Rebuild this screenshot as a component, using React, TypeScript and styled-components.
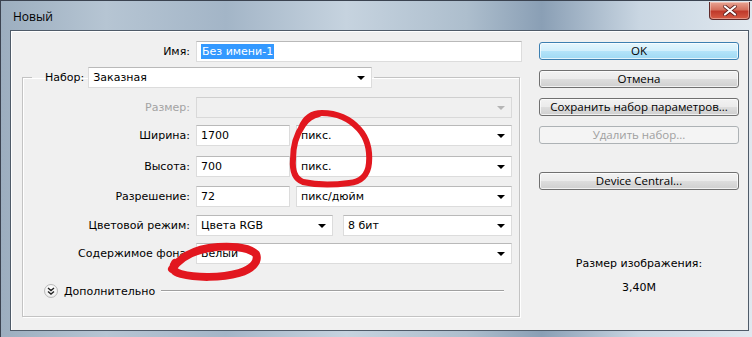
import styled, { createGlobalStyle } from 'styled-components';

const GlobalStyle = createGlobalStyle`
  html, body {
    margin: 0;
    padding: 0;
    background: #6f8aa6;
  }
  * {
    box-sizing: border-box;
  }
`;

const uiFont = `'DejaVu Sans', Tahoma, sans-serif`;
const shellFont = `'Open Sans', 'Segoe UI', sans-serif`;

function Combo({
  value,
  width,
  disabled,
  offset,
}: {
  value?: string;
  width: number;
  disabled?: boolean;
  offset?: number;
}): React.ReactElement {
  return (
    <Field $width={width} $disabled={disabled} $offset={offset}>
      <ComboValue>{value}</ComboValue>
      <Caret $disabled={disabled} />
    </Field>
  );
}

function App(): React.ReactElement {
  return (
    <>
      <GlobalStyle />
      <Window>
        <TitleBar>
          <Title>Новый</Title>
          <CloseButton aria-label="Закрыть">
            <svg width="14" height="11" viewBox="0 0 14 11">
              <path
                d="M2 1.5 L12 9.5 M12 1.5 L2 9.5"
                stroke="#5a1d1d"
                strokeWidth="3.6"
                strokeLinecap="round"
              />
              <path
                d="M2 1.5 L12 9.5 M12 1.5 L2 9.5"
                stroke="#fff"
                strokeWidth="2.2"
                strokeLinecap="round"
              />
            </svg>
          </CloseButton>
        </TitleBar>

        <Client>
          <FormColumn>
            <Row>
              <Label $width={179}>Имя:</Label>
              <Field $width={326}>
                <Selected>Без имени-1</Selected>
              </Field>
            </Row>

            <Group>
              <Legend>
                <Label>Набор:</Label>
                <Combo value="Заказная" width={284} />
              </Legend>

              <Row $top={9}>
                <Label $width={167} $disabled>
                  Размер:
                </Label>
                <Combo width={316} disabled />
              </Row>
              <Row $top={7}>
                <Label $width={167}>Ширина:</Label>
                <Field $width={94}>1700</Field>
                <Combo value="пикс." width={216} />
              </Row>
              <Row $top={10}>
                <Label $width={167}>Высота:</Label>
                <Field $width={94}>700</Field>
                <Combo value="пикс." width={216} />
              </Row>
              <Row $top={9}>
                <Label $width={167}>Разрешение:</Label>
                <Field $width={94}>72</Field>
                <Combo value="пикс/дюйм" width={216} />
              </Row>
              <Row $top={8}>
                <Label $width={167}>Цветовой режим:</Label>
                <Combo value="Цвета RGB" width={137} />
                <Combo value="8 бит" width={169} offset={4} />
              </Row>
              <Row $top={7}>
                <Label $width={167}>Содержимое фона:</Label>
                <Combo value="Белый" width={316} />
              </Row>

              <Advanced>
                <ExpandIcon>
                  <svg width="8" height="8" viewBox="0 0 8 8">
                    <path
                      d="M1 1 L4 3.5 L7 1 M1 4.5 L4 7 L7 4.5"
                      fill="none"
                      stroke="#222"
                      strokeWidth="1.4"
                    />
                  </svg>
                </ExpandIcon>
                <span>Дополнительно</span>
                <Etched />
              </Advanced>
            </Group>
          </FormColumn>

          <ButtonColumn>
            <Button $primary>OK</Button>
            <Button>Отмена</Button>
            <Button>Сохранить набор параметров...</Button>
            <Button disabled>Удалить набор...</Button>
            <Button $top={28}>Device Central...</Button>
            <SizeInfo>
              <p>Размер изображения:</p>
              <p>3,40M</p>
            </SizeInfo>
          </ButtonColumn>
        </Client>

        <Marks width="752" height="337" viewBox="0 0 752 337">
          <path
            d="M300 127 C304 117, 311 112, 321 112 C334 112, 348 117, 358 128 C366 137, 369 150, 368 162 C367 174, 360 181, 348 182 C333 184, 315 184, 302 181 C294 178, 291 170, 292 158 C292 146, 295 134, 302 124 C306 118, 312 114, 318 113"
            fill="none"
            stroke="#e2171f"
            strokeWidth="6"
            strokeLinecap="round"
            strokeLinejoin="round"
          />
          <path
            d="M171 268 C178 258, 190 250, 208 247 C228 244, 248 246, 255 253 C258 260, 252 268, 238 272 C220 277, 195 277, 180 273 C173 271, 170 268, 174 262"
            fill="none"
            stroke="#e2171f"
            strokeWidth="8"
            strokeLinecap="round"
            strokeLinejoin="round"
          />
        </Marks>
      </Window>
    </>
  );
}

export default App;

const Window = styled.div`
  position: relative;
  width: 752px;
  height: 337px;
  display: flex;
  flex-direction: column;
  padding: 0 3px 6px 9px;
  border-top: 1px solid #3b4350;
  border-left: 1px solid #3b4350;
  background: linear-gradient(
    90deg,
    #9caebf 0%,
    #b6c5d3 14%,
    #a3b5c7 30%,
    #c6d3df 46%,
    #adbecd 62%,
    #8a9fb5 72%,
    #c9d6e2 85%,
    #e0e8ef 100%
  );
  overflow: hidden;
`;

const TitleBar = styled.div`
  height: 29px;
  display: flex;
  align-items: flex-start;
  justify-content: space-between;
  padding: 0 0 0 3px;
`;

const Title = styled.span`
  margin-top: 7px;
  font-family: ${shellFont};
  font-size: 12px;
  color: #000;
`;

const CloseButton = styled.button`
  width: 41px;
  height: 18px;
  margin-top: 1px;
  margin-right: -1px;
  padding: 0;
  display: flex;
  align-items: center;
  justify-content: center;
  border: 1px solid #5f2a2a;
  border-top: none;
  border-radius: 0 0 4px 4px;
  background: linear-gradient(180deg, #e8a493 0%, #d4705d 45%, #c0392b 55%, #d65c45 100%);
  box-shadow: inset 0 0 0 1px rgba(255, 255, 255, 0.35);
`;

const Client = styled.div`
  flex: 1;
  display: flex;
  padding: 10px 9px 0 0;
  background: #f0f0f0;
  border: 1px solid #4f5b69;
  box-shadow: inset 1px 1px 0 #ffffff;
  font-family: ${uiFont};
  font-size: 11px;
  color: #000;
`;

const FormColumn = styled.div`
  width: 528px;
  display: flex;
  flex-direction: column;
  gap: 5px;
`;

const Row = styled.div<{ $top?: number }>`
  display: flex;
  align-items: center;
  gap: 6px;
  margin-top: ${({ $top }) => $top ?? 0}px;
`;

const Label = styled.label<{ $width?: number; $disabled?: boolean }>`
  ${({ $width }) => ($width ? `width: ${$width}px;` : '')}
  text-align: right;
  white-space: nowrap;
  color: ${({ $disabled }) => ($disabled ? '#a3a3a3' : '#000')};
`;

const Field = styled.div<{ $width: number; $disabled?: boolean; $offset?: number }>`
  width: ${({ $width }) => $width}px;
  height: 21px;
  margin-left: ${({ $offset }) => $offset ?? 0}px;
  display: flex;
  align-items: center;
  padding: 0 4px;
  background: ${({ $disabled }) => ($disabled ? '#f0f0f0' : '#ffffff')};
  border: 1px solid ${({ $disabled }) => ($disabled ? '#d9d9d9' : '#dcdcdc')};
  border-top-color: ${({ $disabled }) => ($disabled ? '#cfcfcf' : '#b9b9b9')};
  white-space: nowrap;
`;

const ComboValue = styled.span`
  flex: 1;
`;

const Caret = styled.span<{ $disabled?: boolean }>`
  width: 0;
  height: 0;
  margin-right: 2px;
  border-left: 4px solid transparent;
  border-right: 4px solid transparent;
  border-top: 4px solid ${({ $disabled }) => ($disabled ? '#b5b5b5' : '#000')};
`;

const Selected = styled.span`
  background: #3399ff;
  color: #fff;
  padding: 1px 1px;
`;

const Group = styled.fieldset`
  width: 498px;
  margin: 0 0 0 11px;
  padding: 0 0 18px 0;
  border: 1px solid #c3c3c3;
  box-shadow: inset 1px 1px 0 #ffffff, 1px 1px 0 #ffffff;
  min-width: 0;
`;

const Legend = styled.legend`
  display: flex;
  align-items: center;
  gap: 4px;
  margin-left: 9px;
  padding: 0 2px 0 13px;
`;

const Advanced = styled.div`
  display: flex;
  align-items: center;
  gap: 6px;
  margin-top: 20px;
  padding: 0 15px 0 21px;
`;

const ExpandIcon = styled.span`
  width: 14px;
  height: 14px;
  border-radius: 50%;
  display: flex;
  align-items: center;
  justify-content: center;
  background: radial-gradient(circle at 50% 35%, #ffffff 0%, #f3f3f3 60%, #dcdcdc 100%);
  border: 1px solid #b9b9b9;
`;

const Etched = styled.span`
  flex: 1;
  height: 2px;
  border-top: 1px solid #a0a0a0;
  border-bottom: 1px solid #ffffff;
`;

const ButtonColumn = styled.div`
  flex: 1;
  padding-top: 1px;
  display: flex;
  flex-direction: column;
  gap: 10px;
  align-items: stretch;
`;

const Button = styled.button<{ $primary?: boolean; $top?: number }>`
  height: 18px;
  padding: 0;
  margin-top: ${({ $top }) => ($top ? $top - 10 : 0)}px;
  font-family: ${shellFont};
  font-size: 11.5px;
  line-height: 1;
  color: #000;
  border-radius: 3px;
  border: 1px solid ${({ $primary }) => ($primary ? '#3c7fb1' : '#707070')};
  background: ${({ $primary }) =>
    $primary
      ? 'linear-gradient(180deg, #e5f6fd 0%, #d2effc 48%, #b3e3f9 52%, #9fd9f3 100%)'
      : 'linear-gradient(180deg, #f2f2f2 0%, #ebebeb 48%, #dddddd 52%, #cfcfcf 100%)'};
  box-shadow: inset 0 0 0 1px rgba(255, 255, 255, 0.7);

  &:disabled {
    color: #a0a0a0;
    border-color: #adb2b5;
    background: #f4f4f4;
    box-shadow: none;
  }
`;

const SizeInfo = styled.div`
  margin-top: 57px;
  display: flex;
  flex-direction: column;
  align-items: center;
  gap: 10px;
  & p {
    margin: 0;
    line-height: 14px;
  }
`;

const Marks = styled.svg`
  position: absolute;
  left: 0;
  top: 0;
  pointer-events: none;
`;
